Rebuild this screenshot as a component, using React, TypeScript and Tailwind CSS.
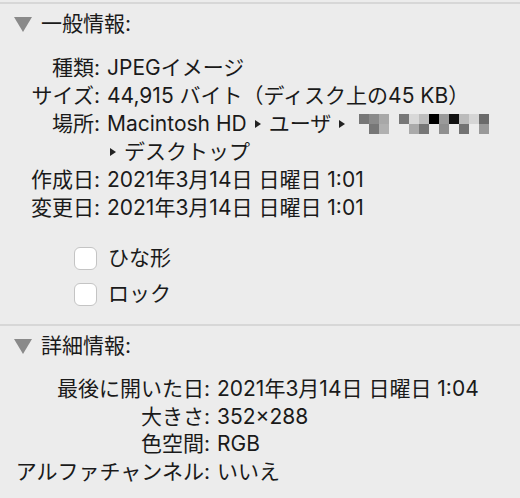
import { ReactNode } from 'react';

const font = { fontFamily: 'Inter, "Noto Sans CJK JP", sans-serif' };

function Disclosure() {
  return (
    <svg width="18" height="15" viewBox="0 0 18 15" className="shrink-0">
      <path d="M0 0 H18 L9 15 Z" fill="#8a8a8a" />
    </svg>
  );
}

function Arrow({ className = 'mx-[8px]' }: { className?: string }) {
  return (
    <svg width="6" height="8" viewBox="0 0 6 8" className={`inline-block align-middle ${className}`}>
      <path d="M0 0 L6 4 L0 8 Z" fill="#222" />
    </svg>
  );
}

// pixelated (redacted) user name
const row1 = ['#777', '#8a8a8a', '#a8a8a8', '', '#777', '#d8d8d8', '#bdbdbd', '#000', '#9a9a9a', '#111', '#bbb', '#d5d5d5', '#6b6b6b'];
const row2 = ['', '#777', '#b0b0b0', '', '', '#aaa', '#777', '', '#8f8f8f', '', '#737373', '', '#999'];

function Mosaic() {
  return (
    <span className="inline-grid grid-cols-[repeat(13,10px)] grid-rows-[10px_10px] align-middle ml-[6px]">
      {[...row1, ...row2].map((c, i) => (
        <span key={i} style={{ backgroundColor: c || 'transparent' }} />
      ))}
    </span>
  );
}

function Row({ label, children }: { label: string; children: ReactNode }) {
  return (
    <>
      <div className="text-right whitespace-nowrap">{label}:</div>
      <div className="whitespace-nowrap">{children}</div>
    </>
  );
}

function Check({ label }: { label: string }) {
  return (
    <div className="flex items-center gap-[11px] h-[36px]">
      <div className="w-[23px] h-[23px] rounded-[6px] bg-white border border-[#c4c4c4]" />
      <span>{label}</span>
    </div>
  );
}

export default function App() {
  return (
    <div className="w-[520px] h-[498px] bg-[#ececec] text-[21px] text-[#1a1a1a] overflow-hidden pt-[2px]" style={font}>
      <div className="border-t-2 border-[#d7d7d7]">
        {/* General info */}
        <div className="flex items-center gap-[9px] pl-[14px] h-[40px]">
          <Disclosure />
          <span>一般情報:</span>
        </div>
        <div className="grid grid-cols-[100px_1fr] gap-x-[7px] leading-[28px] mt-[10px]">
          <Row label="種類">JPEGイメージ</Row>
          <Row label="サイズ">44,915 バイト（ディスク上の45 KB）</Row>
          <Row label="場所">
            <span className="flex items-center">
              Macintosh HD
              <Arrow />
              ユーザ
              <Arrow />
              <Mosaic />
            </span>
          </Row>
          <div />
          <div className="flex items-center">
            <Arrow className="ml-[3px] mr-[8px]" />
            <span>デスクトップ</span>
          </div>
          <Row label="作成日">2021年3月14日 日曜日 1:01</Row>
          <Row label="変更日">2021年3月14日 日曜日 1:01</Row>
        </div>
        <div className="pl-[74px] mt-[18px]">
          <Check label="ひな形" />
          <Check label="ロック" />
        </div>
      </div>

      {/* More info */}
      <div className="border-t-2 border-[#d7d7d7] mt-[12px]">
        <div className="flex items-center gap-[9px] pl-[14px] h-[40px]">
          <Disclosure />
          <span>詳細情報:</span>
        </div>
        <div className="grid grid-cols-[210px_1fr] gap-x-[7px] leading-[27.5px] mt-[9px]">
          <Row label="最後に開いた日">2021年3月14日 日曜日 1:04</Row>
          <Row label="大きさ">352×288</Row>
          <Row label="色空間">RGB</Row>
          <Row label="アルファチャンネル">いいえ</Row>
        </div>
      </div>
    </div>
  );
}
